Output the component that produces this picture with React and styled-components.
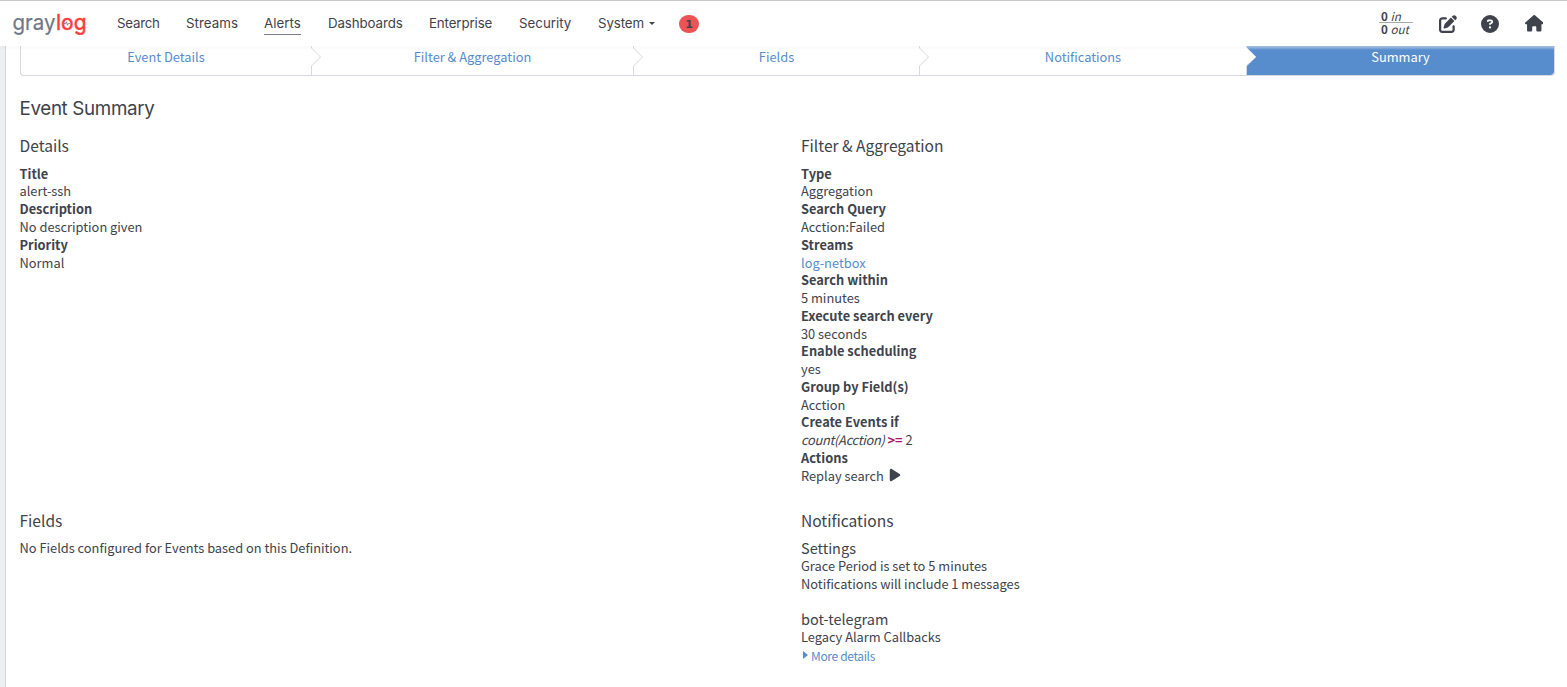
import React from "react";
import styled, { createGlobalStyle } from "styled-components";
import { FaCircleQuestion, FaHouse, FaPenToSquare, FaPlay } from "react-icons/fa6";

const Global = createGlobalStyle`
  * { box-sizing: border-box; }
  html, body, #root { height: 687px; overflow: hidden; }
  body {
    margin: 0;
    background: #eeeff2;
    color: #3e434c;
    font-family: "Noto Sans CJK SC", "Noto Sans", sans-serif;
    font-size: 12.84px;
    line-height: 17.77px;
  }
`;

const Page = styled.div`
  height: 687px;
  display: flex;
  flex-direction: column;
`;

const Navbar = styled.header`
  position: relative;
  z-index: 2;
  flex: none;
  height: 46px;
  display: flex;
  align-items: center;
  padding: 0 22px 0 13px;
  border-top: 1px solid #c8c8c8;
  background: #fff;
  box-shadow: 0 3px 3px rgba(0, 0, 0, 0.02);
`;

const Logo = styled.svg`
  flex: none;
  width: 74px;
  height: 28px;
  margin-right: 30px;
`;

const NavItem = styled.a`
  flex: none;
  width: ${(p) => p.$w}px;
  margin-right: 27px;
  padding-bottom: 1px;
  border-bottom: 1px solid ${(p) => (p.$active ? "#787c86" : "transparent")};
  font: 13.3px/20px Inter, sans-serif;
  letter-spacing: ${(p) => p.$ls || 0}px;
  white-space: nowrap;
`;

const Caret = styled.i`
  display: inline-block;
  margin-left: 5px;
  vertical-align: 3px;
  border: 3.5px solid transparent;
  border-top-color: #3e434c;
  border-bottom: 0;
`;

const Badge = styled.span`
  width: 20px;
  height: 18px;
  margin-left: -3px;
  border-radius: 9px;
  background: #eb5454;
  font: bold 11px/19px "DejaVu Sans", sans-serif;
  text-align: center;
`;

const Throughput = styled.div`
  width: 34px;
  margin-left: auto;
  margin-right: 24px;
  padding-bottom: 2px;
  font-size: 11.6px;
  line-height: 12.5px;
  white-space: nowrap;
`;

const Rate = styled.div`
  padding-left: 2px;
  & + & { border-top: 1px solid #a4a8b3; }
`;

const NavIcon = styled.span`
  display: flex;
  justify-content: center;
  width: 22px;
  margin-right: ${(p) => p.$gap || 0}px;
  font-size: ${(p) => p.$size}px;
`;

const Content = styled.main`
  flex: 1;
  margin-left: 5px;
  padding: 0 12px 0 14px;
  border-left: 1px solid #d4d5e0;
  background: #fff;
`;

const Steps = styled.nav`
  display: flex;
  height: 30px;
  border: 1px solid #d6d8e2;
  border-top: 0;
  border-radius: 0 0 4px 4px;
`;

const Step = styled.a`
  display: flex;
  flex: 0 0 ${(p) => p.$w}px;
  justify-content: center;
  position: relative;
  padding-right: ${(p) => (p.$active ? 0 : 1)}px;
  line-height: 21px;
  color: ${(p) => (p.$active ? "#fff" : "#578dcc")};
  background: ${(p) => (p.$active ? "linear-gradient(#9fbee3 0, #9fbee3 1px, #578dcc 4px)" : "none")};
  border-radius: ${(p) => (p.$active ? "0 0 4px 0" : "0")};
`;

const Chevron = styled.svg`
  position: absolute;
  left: -1px;
  top: 0;
  width: 11px;
  height: 29px;
`;

const Title = styled.h2`
  margin: 21px 0 0 -0.5px;
  font: 400 18.8px/24px Inter, sans-serif;
  letter-spacing: -0.35px;
`;

const Columns = styled.div`
  display: grid;
  grid-template-columns: 781.5px 1fr;
  margin-left: -0.5px;
`;

const Section = styled.section`
  padding-top: ${(p) => p.$top}px;
`;

const Heading = styled.h3`
  margin: 0 0 ${(p) => p.$gap}px;
  font-size: 15.55px;
  font-weight: 400;
  line-height: 20px;
`;

const SubHeading = styled.h4`
  margin: ${(p) => p.$top || 0}px 0 0;
  font-size: 14.5px;
  font-weight: 400;
  line-height: 18px;
`;

const List = styled.dl`
  margin: 0;
`;
const Term = styled.dt`
  font-weight: 700;
`;
const Value = styled.dd`
  margin: 0;
`;
const Text = styled.p`
  margin: 0;
`;
const Link = styled.a`
  color: #578dcc;
`;
const Expression = styled.em`
  letter-spacing: -0.28px;
`;
const Operator = styled.b`
  color: #a6186b;
`;
const PlayIcon = styled(FaPlay)`
  margin-left: 4px;
  font-size: 14px;
  vertical-align: -1px;
`;
const More = styled(Link)`
  display: flex;
  align-items: center;
  padding-left: 1px;
  font-size: 12px;
  letter-spacing: -0.35px;
  line-height: 19px;
`;
const MoreCaret = styled.svg`
  width: 5px;
  height: 8px;
  margin: 0 3px 0 1px;
`;

const nav = [
  ["Search", 42, -0.25],
  ["Streams", 51, 0.05],
  ["Alerts", 37, 0.05],
  ["Dashboards", 74, -0.1],
  ["Enterprise", 63, -0.12],
  ["Security", 52, 0],
];

const steps = [
  ["Event Details", 291],
  ["Filter & Aggregation", 322],
  ["Fields", 286],
  ["Notifications", 327],
  ["Summary", 307],
];

const details = [
  ["Title", "alert-ssh"],
  ["Description", "No description given"],
  ["Priority", "Normal"],
];

const filter = [
  ["Type", "Aggregation"],
  ["Search Query", "Acction:Failed"],
  ["Streams", <Link>log-netbox</Link>],
  ["Search within", "5 minutes"],
  ["Execute search every", "30 seconds"],
  ["Enable scheduling", "yes"],
  ["Group by Field(s)", "Acction"],
  ["Create Events if", <><Expression>count(Acction)</Expression> <Operator>&gt;=</Operator> 2</>],
  ["Actions", <>Replay search<PlayIcon /></>],
];

const Definitions = ({ items }) => (
  <List>
    {items.map(([term, value]) => (
      <React.Fragment key={term}>
        <Term>{term}</Term>
        <Value>{value}</Value>
      </React.Fragment>
    ))}
  </List>
);

export default function App() {
  return (
    <Page>
      <Global />
      <Navbar>
        <Logo viewBox="0 0 74 28">
          <text x="-0.5" y="20" fontFamily="Inter" fontSize="22" fill="#6f7887" stroke="#6f7887" strokeWidth=".2" textLength="43" lengthAdjust="spacingAndGlyphs">gray</text>
          <text x="43" y="20" fontFamily="Inter" fontSize="22" fill="#ff3b3b" stroke="#ff3b3b" strokeWidth=".5" textLength="30.5" lengthAdjust="spacingAndGlyphs">log</text>
          <path d="M51 13.5h1.6l.9-1.7 1 3.4.9-1.7h1.4" fill="none" stroke="#6f7887" strokeWidth=".9" />
        </Logo>
        {nav.map(([label, w, ls]) => (
          <NavItem key={label} $w={w} $ls={ls} $active={label === "Alerts"}>{label}</NavItem>
        ))}
        <NavItem $w={57} $ls={-0.1}>System<Caret /></NavItem>
        <Badge>1</Badge>
        <Throughput>
          <Rate><b>0</b> <em>in</em></Rate>
          <Rate><b>0</b> <em>out</em></Rate>
        </Throughput>
        <NavIcon $size={18} $gap={20}><FaPenToSquare /></NavIcon>
        <NavIcon $size={18} $gap={22}><FaCircleQuestion /></NavIcon>
        <NavIcon $size={18.5}><FaHouse /></NavIcon>
      </Navbar>
      <Content>
        <Steps>
          {steps.map(([label, w], i) => (
            <Step key={label} $w={w} $active={i === 4}>
              {i > 0 && (
                <Chevron viewBox="0 0 11 29">
                  <path d="M.5 0v2l9 9-9 9v9" fill="none" stroke="#d6d8e2" />
                  {i === 4 && <path d="M0 1l10 10L0 20z" fill="#fff" />}
                </Chevron>
              )}
              {label}
            </Step>
          ))}
        </Steps>
        <Title>Event Summary</Title>
        <Columns>
          <Section $top={14}>
            <Heading $gap={9.7}>Details</Heading>
            <Definitions items={details} />
          </Section>
          <Section $top={14}>
            <Heading $gap={9.7}>Filter &amp; Aggregation</Heading>
            <Definitions items={filter} />
          </Section>
          <Section $top={25.3}>
            <Heading $gap={9.1}>Fields</Heading>
            <Text>No Fields configured for Events based on this Definition.</Text>
          </Section>
          <Section $top={25.3}>
            <Heading $gap={9.1}>Notifications</Heading>
            <SubHeading>Settings</SubHeading>
            <Text>Grace Period is set to 5 minutes</Text>
            <Text>Notifications will include 1 messages</Text>
            <SubHeading $top={17.6}>bot-telegram</SubHeading>
            <Text>Legacy Alarm Callbacks</Text>
            <More>
              <MoreCaret viewBox="0 0 5 8"><path d="M0 0l5 4-5 4z" fill="currentColor" /></MoreCaret>
              More details
            </More>
          </Section>
        </Columns>
      </Content>
    </Page>
  );
}
